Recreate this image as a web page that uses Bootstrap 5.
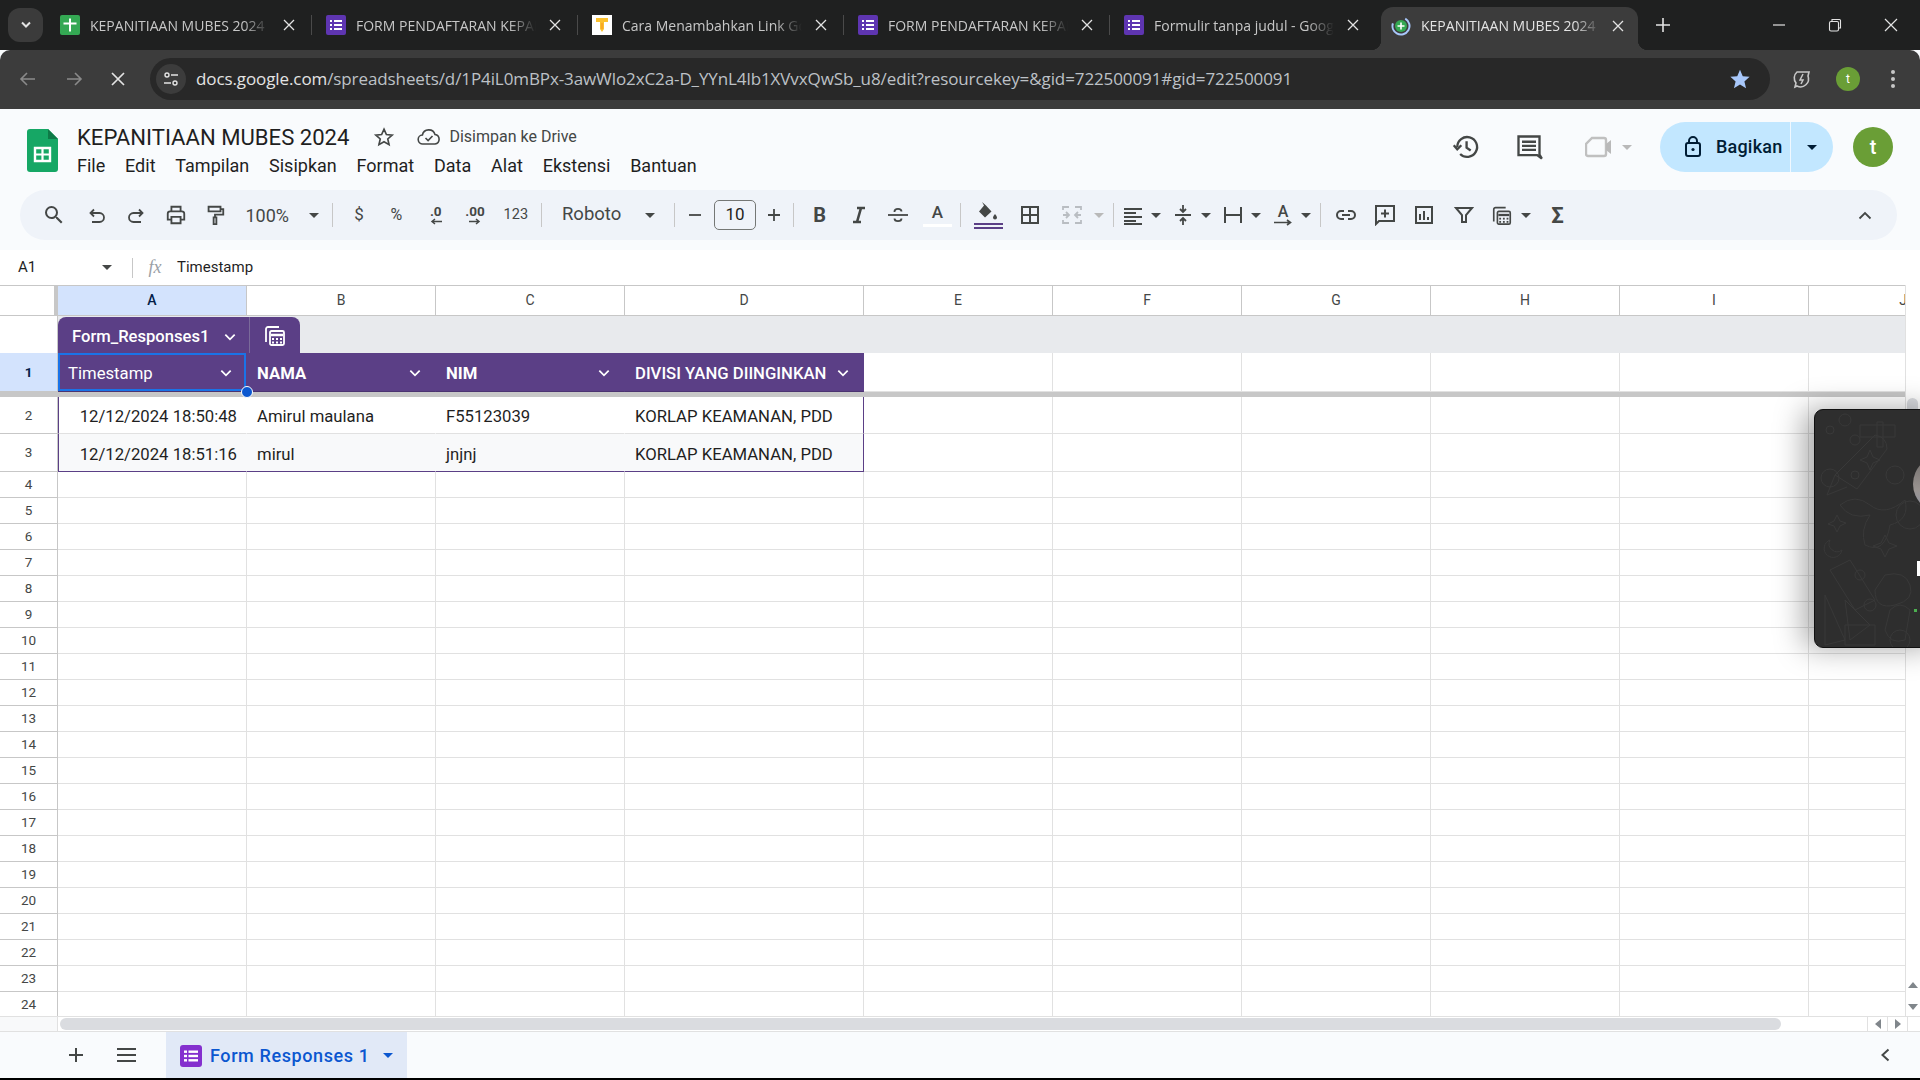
<!DOCTYPE html>
<html lang="id">
<head>
<meta charset="utf-8">
<title>KEPANITIAAN MUBES 2024</title>
<link href="https://cdn.jsdelivr.net/npm/bootstrap@5.3.0/dist/css/bootstrap.min.css" rel="stylesheet">
<style>
html,body{height:100%;margin:0;overflow:hidden;background:#f9fbfd}
body{font-family:Roboto,"Liberation Sans",sans-serif;color:#1f1f1f}
.app{width:1920px;height:1080px;position:relative;overflow:hidden}
.tabstrip{height:50px;background:#1f2020;padding-left:8px;color:#c7c7c7;font-family:"Open Sans",Roboto,sans-serif;font-size:14px;flex:none}
.tabsearch{width:35px;height:34px;margin-top:8px;border-radius:12px;background:#3b3b3b;flex:none;margin-right:3px}
.btab{width:266px;height:50px;flex:none;padding:0 0 0 14px;position:relative}
.btab::after{content:"";position:absolute;right:0;top:15px;height:20px;width:1px;background:#4a4a4a}
.btab.nosep::after{display:none}
.btab.onnow{width:257px;height:43px;margin-top:7px;margin-left:5px;background:#3c3c3c;border-radius:12px 12px 0 0;padding:0 0 6px 10px;color:#e3e3e3}
.btab.onnow::before{content:"";position:absolute;left:-10px;bottom:0;width:10px;height:10px;background:radial-gradient(circle at 0 0,transparent 10px,#3c3c3c 10.5px)}
.btab.onnow::after{display:block;left:auto;right:-10px;top:auto;bottom:0;width:10px;height:10px;background:radial-gradient(circle at 100% 0,transparent 10px,#3c3c3c 10.5px)}
.fav{width:20px;height:20px;flex:none;display:block}
.tabname{width:180px;margin-left:10px;white-space:nowrap;overflow:hidden;-webkit-mask-image:linear-gradient(90deg,#000 85%,transparent);mask-image:linear-gradient(90deg,#000 85%,transparent)}
.tabx{margin-left:12px;width:14px;height:14px;flex:none;color:#e3e3e3}
.onnow .tabx{margin-left:10px}
.plusbtn{margin-left:18px}
.winctl{margin-left:auto;width:148px;padding-right:22px;color:#e3e3e3}
.addrbar{height:59px;background:#3c3c3c;border-radius:10px 10px 0 0;padding:8px 0 9px 0;color:#c7c7c7;flex:none}
.navbtns{width:150px;padding:0 24px 0 18px;color:#8a8a8a;flex:none}
.urlpill{width:1620px;height:42px;background:#282828;border-radius:21px;padding:0 6px;flex:none}
.tunebtn{width:30px;height:30px;border-radius:50%;background:#3c3c3c;flex:none;margin-right:10px;color:#e3e3e3}
.urltxt{font-family:"Open Sans",Roboto,sans-serif;font-size:17px;letter-spacing:-.1px;color:#e3e3e3;white-space:nowrap;flex:1 1 auto}
.urltxt span{color:#bdc1c6}
.urlstar{margin-right:13px;flex:none}
.exticons{flex:1 1 auto;padding:0 24px 0 20px}
.prof{width:24px;height:24px;border-radius:50%;background:#6a9e36;color:#fff;font-size:12px;line-height:24px;text-align:center;margin:0 30px 0 22px;flex:none}
.dochead{height:81px;background:#f9fbfd;flex:none;padding-left:27px;position:relative}
.sheetlogo{width:31px;height:43px;margin-top:20px;flex:none}
.docmain{margin-left:19px;padding-top:12px}
.docname{font-size:22.1px;line-height:32px;color:#1f1f1f}
.cloudgap{margin-left:22px;flex:none}
.savedtxt{font-size:16px;color:#444746}
.menurow{gap:19.8px;font-size:18px;line-height:24px;margin-top:1px;color:#1f1f1f}
.dochead-right{margin-left:auto;padding:13px 27px 0 0;height:63px}
.gap-cmt{margin-left:35px;flex:none}
.gap-vid{margin-left:42px;flex:none}
.gap-vidc{margin-left:10px;margin-right:28px;flex:none}
.bagikan{height:50px;width:173px;border-radius:25px;background:#c2e7ff;color:#001d35;font-weight:500;font-size:18px;letter-spacing:.2px;flex:none}
.bagmain{width:131px;height:50px;border-right:1px solid #f0f8ff;padding:0 0 2px 23px;gap:13px}
.bagcaret{width:42px}
.docava{width:40px;height:40px;border-radius:50%;background:#6a9e36;color:#fff;font-size:20px;font-weight:500;margin-left:20px}
.tbwrap{height:60px;background:#f9fbfd;padding:0 23px 10px 20px;flex:none}
.tbar{height:50px;background:#eff3f9;border-radius:25px;color:#444746;padding-left:14px;font-size:16px}
.ti{width:39.3px;height:50px;flex:none;color:#444746}
.ti svg,.tw svg{display:block}
.tt{height:50px;flex:none;color:#444746}
.tsep{width:1px;height:24px;background:#c7c7c7;flex:none;margin:0 1px}
.tw{height:50px;flex:none}
.zoomsel{width:78px;margin-left:11px;font-size:18px}
.sep-zoom{margin:0 4px 0 9px}
.sep-fmt{margin:0 1px 0 7px}
.sep-size{margin:0 6px 0 1px}
.fontsel{width:130px;padding:0 18px 0 19px;font-size:18.5px}
.w-minus{width:38px}
.w-plus{width:36px}
.sizebox{width:42px;height:30px;border:1px solid #747775;border-radius:5px;font-size:17px;flex:none;color:#1f1f1f}
.smallnum{font-size:13.5px}
.num123{font-size:14.5px;padding-left:3px}
.dollar{font-size:17px;padding-left:4px}
.txtA{font-size:17px;font-weight:500}
.bar2{width:29px;height:3px;display:block;margin-top:3px}
.barfill{width:29px;height:6px;display:block;margin-top:1px;border-top:2px solid #5b3f86;border-bottom:2px solid #5b3f86}
.w-fill{width:44px;margin-left:4px}
.w-bord{width:39px}
.w-merge{width:34px}
.gap-mc{margin:0 8px 0 11px;flex:none}
.sep-a{margin:0 1px 0 3px}
.rotA{font-size:16px;font-weight:500;margin-bottom:-1px}
.sigma{font-size:22px;font-weight:700;margin-left:4px}
.collapse-ico{margin-left:auto;margin-right:25px}
.fbar{height:35px;background:#fff;flex:none;font-size:15px;color:#1f1f1f}
.cellref{width:132px;padding-left:18px;position:relative}
.fxsep{width:1px;height:20px;background:#c7c7c7;flex:none}
.fxmark{width:44px;text-align:center;font-family:"Liberation Serif",serif;font-style:italic;font-size:18px;color:#9aa0a6;flex:none}
.gridzone{height:731px;flex:none;background:#fff}
.gridclip{width:1905px;height:731px;overflow:hidden;flex:none}
.vscroll{width:15px;height:731px;border-left:1px solid #e1e1e1;flex:none;background:#fff;position:relative}
.vthumb{height:90px;margin:113px 2px 0 1px;border-radius:6px;background:#dadce0}
.varrows{padding-bottom:6px}
.sheet{border-collapse:separate;border-spacing:0;table-layout:fixed;width:1997px;font-size:16.7px;color:#1f1f1f}
.cw58{width:58px}.cw189{width:189px}.cw239{width:239px}
.sheet td,.sheet th{padding:0;border-right:1px solid #e1e1e1;border-bottom:1px solid #e1e1e1;font-weight:400;white-space:nowrap;overflow:hidden;vertical-align:middle}
.sheet th{text-align:center;color:#444746;font-size:13.5px}
.sheet .rowh{border-right:1px solid #c7c7c7;border-bottom-color:#c7c7c7}
.hdrrow th{height:31px;border-top:1px solid #c7c7c7;border-bottom:1px solid #c7c7c7;border-right:1px solid #c7c7c7;font-size:14px}
.hdrrow .corner{border-right:4px solid #c7c7c7;background:#fff}
.hdrrow .selcol{background:#d3e3fd;color:#041e49;font-weight:500}
.tabrow{height:37px}
.sheet .tabcell{background:#e8eaed;border-right:0;border-bottom:0;vertical-align:bottom;overflow:visible}
.sheet .tabh{border-bottom:0}
.tbltab{height:36px;width:242px;background:#5b3f86;border-radius:8px 8px 0 0;color:#fff;font-weight:500;font-size:16.6px}
.tblname{width:192px;padding:4px 8px 0 14px;border-right:1px solid #7a6a9a;height:36px}
.tblcalc{width:50px}
.r1{height:39px}
.r1 .rowh{background:#d3e3fd;color:#041e49;font-weight:700}
.sheet .pur{background:#5b3f86;color:#fff;font-weight:700;padding:3px 9px 0 10px;border-color:#4b3370;border-right-color:#5b3f86;position:relative}
.sheet .pur.a1{font-weight:400;box-shadow:inset 0 0 0 2px #1a73e8;overflow:visible}
.purin{gap:4px}
.knob{position:absolute;right:-7px;bottom:-7px;width:12px;height:12px;border-radius:50%;background:#0b57d0;border:1px solid #fff;z-index:3}
.frz{height:5px;font-size:0;line-height:0}
.sheet .frz td{background:#c7c7c7;border:0;height:5px}
.r2{height:37px}.r3{height:38px}.rn{height:26px}
.sheet .dat{padding:4px 9px 0 10px;border-right-color:#fff}
.r3 .dat{background:#f8f9fa;border-bottom-color:#5b3f86;border-right-color:#f8f9fa}
.sheet .dat.num{text-align:right;padding-right:9px;border-left:1px solid #5b3f86}
.sheet .dat.endc{border-right-color:#5b3f86}
.hstrip{height:15px;border-top:1px solid #e1e1e1;flex:none;background:#fff}
.hstrip-left{width:58px;background:#f8f9fa;flex:none;border-right:1px solid #e1e1e1}
.hthumb{width:1721px;height:12px;margin:1px 0 0 2px;border-radius:6px;background:#dadce0;flex:none}
.harrow{width:20px;height:14px;border-left:1px solid #e1e1e1;flex:none;color:#80868b}
.harrow.endbit{width:13px}
.sbar{height:47px;border-top:1px solid #e1e1e1;background:#f9fbfd;flex:none;position:relative;color:#444746}
.sbar-add{width:166px;flex:none;padding-left:67px;gap:32px}
.sheettab{width:241px;background:#e1e9f7;color:#0b57d0;font-weight:500;font-size:18px;letter-spacing:.6px;padding:1px 0 0 14px;gap:8px;flex:none}
.sheetcaret{margin-left:5px}
.sbar-end{margin-right:30px}
.bottomline{height:2px;background:#000;flex:none}
.floatcard{position:absolute;left:1814px;top:409px;width:130px;height:239px;background:#2e2e2e;border:1px solid #111;border-radius:9px;box-shadow:-10px 0 30px rgba(0,0,0,.35);overflow:hidden}
.floatcard svg{position:absolute;left:0;top:0}
.dis{color:#b9b9b9}
.txtg{color:#444746}
</style>
</head>
<body>
<svg width="0" height="0" class="position-absolute">
<defs>
<symbol id="i-x" viewBox="0 0 14 14"><path d="M2 2l10 10M12 2L2 12" stroke="currentColor" stroke-width="1.3" fill="none"/></symbol>
<symbol id="i-form" viewBox="0 0 20 20"><rect width="20" height="20" fill="#5e35b1" rx="2"/><g fill="#fff"><rect x="4" y="5" width="2" height="2"/><rect x="8" y="5" width="8" height="2"/><rect x="4" y="9" width="2" height="2"/><rect x="8" y="9" width="8" height="2"/><rect x="4" y="13" width="2" height="2"/><rect x="8" y="13" width="8" height="2"/></g></symbol>
<symbol id="i-caret" viewBox="0 0 10 5"><path d="M0 0h10L5 5z" fill="currentColor"/></symbol>
<symbol id="i-chev" viewBox="0 0 12 12"><path d="M2 4l4 4 4-4" stroke="currentColor" stroke-width="1.5" fill="none"/></symbol>
<symbol id="i-calc" viewBox="0 0 24 24"><path d="M3 19V6a2 2 0 0 1 2-2h11" fill="none" stroke="currentColor" stroke-width="1.8"/><rect x="7" y="8" width="14" height="14" rx="1.5" fill="none" stroke="currentColor" stroke-width="1.8"/><path d="M8 12h12" stroke="currentColor" stroke-width="2.5"/><g fill="currentColor"><rect x="9" y="15" width="2" height="2"/><rect x="13" y="15" width="2" height="2"/><rect x="17" y="15" width="2" height="2"/><rect x="9" y="18.5" width="2" height="2"/><rect x="13" y="18.5" width="2" height="2"/><rect x="17" y="18.5" width="2" height="2"/></g></symbol>
<linearGradient id="facegrad" x1="0" y1="0" x2="0" y2="1"><stop offset="0" stop-color="#6f6a68"/><stop offset=".6" stop-color="#9a9491"/><stop offset="1" stop-color="#8d93a6"/></linearGradient>
</defs>
</svg>
<div class="app d-flex flex-column">
  <div class="tabstrip d-flex">
    <div class="tabsearch d-flex align-items-center justify-content-center"><svg width="12" height="8" viewBox="0 0 12 8"><path d="M2 1.5l4 4 4-4" fill="none" stroke="#e3e3e3" stroke-width="2"/></svg></div>
    <div class="btab d-flex align-items-center">
      <svg class="fav" viewBox="0 0 20 20"><rect width="20" height="20" rx="2" fill="#34a853"/><path d="M10 3.5v13M3.5 8.5h13" stroke="#fff" stroke-width="2"/></svg>
      <span class="tabname">KEPANITIAAN MUBES 2024</span><svg class="tabx"><use href="#i-x"/></svg>
    </div>
    <div class="btab d-flex align-items-center">
      <svg class="fav"><use href="#i-form"/></svg>
      <span class="tabname">FORM PENDAFTARAN KEPANITIAAN</span><svg class="tabx"><use href="#i-x"/></svg>
    </div>
    <div class="btab d-flex align-items-center">
      <svg class="fav" viewBox="0 0 20 20"><rect width="20" height="20" fill="#fff"/><path d="M4 3h12v4h-4v7l-2 3-2-3V7H4z" fill="#fbc02d"/><path d="M9 8h2v6H9z" fill="#f9a825"/></svg>
      <span class="tabname">Cara Menambahkan Link Google Form</span><svg class="tabx"><use href="#i-x"/></svg>
    </div>
    <div class="btab d-flex align-items-center">
      <svg class="fav"><use href="#i-form"/></svg>
      <span class="tabname">FORM PENDAFTARAN KEPANITIAAN</span><svg class="tabx"><use href="#i-x"/></svg>
    </div>
    <div class="btab nosep d-flex align-items-center">
      <svg class="fav"><use href="#i-form"/></svg>
      <span class="tabname">Formulir tanpa judul - Google Formulir</span><svg class="tabx"><use href="#i-x"/></svg>
    </div>
    <div class="btab onnow d-flex align-items-center">
      <svg class="fav" viewBox="0 0 20 20"><circle cx="10" cy="10" r="8.5" fill="none" stroke="#a8c7fa" stroke-width="2" stroke-dasharray="38 16" transform="rotate(-60 10 10)"/><circle cx="10" cy="10" r="6" fill="#34a853"/><path d="M10 6.5v7M6.5 10h7" stroke="#fff" stroke-width="1.6"/></svg>
      <span class="tabname">KEPANITIAAN MUBES 2024</span><svg class="tabx"><use href="#i-x"/></svg>
    </div>
    <div class="plusbtn d-flex align-items-center"><svg width="14" height="14" viewBox="0 0 14 14"><path d="M7 0v14M0 7h14" stroke="#e3e3e3" stroke-width="1.6"/></svg></div>
    <div class="winctl d-flex align-items-center justify-content-between">
      <svg width="14" height="14" viewBox="0 0 14 14"><path d="M1 7h12" stroke="#e3e3e3" stroke-width="1.2"/></svg>
      <svg width="14" height="14" viewBox="0 0 14 14"><rect x="1.5" y="3.5" width="9" height="9.5" rx="1.5" fill="none" stroke="#e3e3e3" stroke-width="1.1"/><path d="M4 3V1.5h7.5a1 1 0 0 1 1 1V10H11" fill="none" stroke="#e3e3e3" stroke-width="1.1"/></svg>
      <svg width="14" height="14" viewBox="0 0 14 14"><path d="M1 1l12 12M13 1L1 13" stroke="#e3e3e3" stroke-width="1.2"/></svg>
    </div>
  </div>
  <div class="addrbar d-flex align-items-center">
    <div class="navbtns d-flex align-items-center justify-content-between">
      <svg width="20" height="20" viewBox="0 0 20 20"><path d="M17 10H4M9 4l-6 6 6 6" fill="none" stroke="currentColor" stroke-width="1.6"/></svg>
      <svg width="20" height="20" viewBox="0 0 20 20"><path d="M3 10h13M11 4l6 6-6 6" fill="none" stroke="currentColor" stroke-width="1.6"/></svg>
      <svg width="16" height="16" viewBox="0 0 16 16"><path d="M2 2l12 12M14 2L2 14" fill="none" stroke="#e3e3e3" stroke-width="1.7"/></svg>
    </div>
    <div class="urlpill d-flex align-items-center">
      <div class="tunebtn d-flex align-items-center justify-content-center"><svg width="16" height="16" viewBox="0 0 16 16"><g fill="none" stroke="currentColor" stroke-width="1.4"><circle cx="4" cy="4" r="2"/><path d="M8 4h7M1 12h7"/><circle cx="12" cy="12" r="2"/></g></svg></div>
      <div class="urltxt">docs.google.com<span>/spreadsheets/d/1P4iL0mBPx-3awWlo2xC2a-D_YYnL4lb1XVvxQwSb_u8/edit?resourcekey=&amp;gid=722500091#gid=722500091</span></div>
      <svg class="urlstar" width="22" height="22" viewBox="0 0 24 24"><path d="M12 2l3 7 7.5.6-5.7 5 1.8 7.4L12 18l-6.6 4 1.8-7.4-5.7-5L9 9z" fill="#a8c7fa"/></svg>
    </div>
    <div class="exticons d-flex align-items-center">
      <svg class="flex-none" width="24" height="24" viewBox="0 0 24 24"><path d="M7 5h12l-1 4v0a8 8 0 0 1-11 10l-2 1 1-4a8 8 0 0 1 1-11z" fill="none" stroke="#c7c7c7" stroke-width="1.6"/><path d="M13 7l-3 6h3l-2 4" fill="none" stroke="#c7c7c7" stroke-width="1.5"/></svg>
      <div class="prof">t</div>
      <svg class="flex-none" width="6" height="20" viewBox="0 0 6 20"><g fill="#c7c7c7"><circle cx="3" cy="3" r="2"/><circle cx="3" cy="10" r="2"/><circle cx="3" cy="17" r="2"/></g></svg>
    </div>
  </div>
  <div class="dochead d-flex">
    <svg class="sheetlogo" viewBox="0 0 31 43"><path d="M3 0h18l10 10v30a3 3 0 0 1-3 3H3a3 3 0 0 1-3-3V3a3 3 0 0 1 3-3z" fill="#16a765"/><path d="M21 0l10 10H21z" fill="#0e7a47"/><path d="M8 19h15v13H8z" fill="none" stroke="#fff" stroke-width="2.4"/><path d="M15.5 19v13M8 25.5h15" stroke="#fff" stroke-width="2.2"/></svg>
    <div class="docmain">
      <div class="d-flex align-items-center">
        <span class="docname">KEPANITIAAN MUBES 2024</span>
        <svg class="ms-4 flex-none" width="22" height="22" viewBox="0 0 24 24"><path d="M12 3.5l2.6 5.8 6.3.6-4.8 4.2 1.4 6.2L12 17.1l-5.5 3.2 1.4-6.2-4.8-4.2 6.3-.6z" fill="none" stroke="#444746" stroke-width="1.8"/></svg>
        <svg class="cloudgap" width="24" height="20" viewBox="0 0 24 20"><path d="M6 17a4.5 4.5 0 0 1-.6-9A6.5 6.5 0 0 1 18 7.5 4.8 4.8 0 0 1 18 17z" fill="none" stroke="#444746" stroke-width="1.6"/><path d="M8.5 11l2.6 2.6 4.4-4.6" fill="none" stroke="#444746" stroke-width="1.6"/></svg>
        <span class="savedtxt ms-2">Disimpan ke Drive</span>
      </div>
      <div class="menurow d-flex"><span>File</span><span>Edit</span><span>Tampilan</span><span>Sisipkan</span><span>Format</span><span>Data</span><span>Alat</span><span>Ekstensi</span><span>Bantuan</span></div>
    </div>
    <div class="dochead-right d-flex align-items-center">
      <svg class="flex-none" width="28" height="28" viewBox="0 0 24 24"><path d="M4.5 12A8.5 8.5 0 1 1 7 18" fill="none" stroke="#444746" stroke-width="2"/><path d="M1.5 10.5L4.5 14l3.5-3.5" fill="none" stroke="#444746" stroke-width="2"/><path d="M12.5 7v5.5l3.5 2.5" fill="none" stroke="#444746" stroke-width="2"/></svg>
      <svg class="gap-cmt" width="28" height="28" viewBox="0 0 24 24"><path d="M3 3h18v15.5l2 3.5-4-3H3z" fill="none" stroke="#444746" stroke-width="2"/><path d="M6 7.5h12M6 11h12M6 14.5h12" stroke="#444746" stroke-width="2"/></svg>
      <svg class="gap-vid" width="27" height="24" viewBox="0 0 27 24"><path d="M7 3h12a2 2 0 0 1 2 2v14a2 2 0 0 1-2 2H3a2 2 0 0 1-2-2V9z" fill="none" stroke="#c0c0c0" stroke-width="2.4"/><path d="M21 9l5-4v14l-5-4z" fill="#b9b9b9"/></svg>
      <svg class="gap-vidc dis" width="10" height="5"><use href="#i-caret"/></svg>
      <div class="bagikan d-flex align-items-center">
        <div class="bagmain d-flex align-items-center"><svg class="flex-none" width="20" height="23" viewBox="0 0 20 23"><rect x="3" y="8" width="14" height="13" rx="2" fill="none" stroke="#001d35" stroke-width="2"/><path d="M6 8V6a4 4 0 0 1 8 0v2" fill="none" stroke="#001d35" stroke-width="2"/><circle cx="10" cy="14.5" r="1.6" fill="#001d35"/></svg><span>Bagikan</span></div>
        <div class="bagcaret d-flex align-items-center justify-content-center"><svg width="10" height="5"><use href="#i-caret"/></svg></div>
      </div>
      <div class="docava d-flex align-items-center justify-content-center flex-none">t</div>
    </div>
  </div>
  <div class="tbwrap">
    <div class="tbar d-flex align-items-center">
      <div class="ti d-flex align-items-center justify-content-center"><svg width="24" height="24" viewBox="0 0 24 24"><path fill="currentColor" d="M15.5 14h-.79l-.28-.27A6.471 6.471 0 0 0 16 9.5 6.5 6.5 0 1 0 9.5 16c1.61 0 3.09-.59 4.23-1.57l.27.28v.79l5 4.99L20.49 19l-4.99-5zm-6 0C7.01 14 5 11.99 5 9.5S7.01 5 9.5 5 14 7.01 14 9.5 11.99 14 9.5 14z"/></svg></div>
      <div class="ti d-flex align-items-center justify-content-center ms-1"><svg width="20" height="20" viewBox="0 0 20 20"><path d="M3.5 8h9a4.5 4.5 0 0 1 0 9H5M7 4.5L3.5 8 7 11.5" fill="none" stroke="currentColor" stroke-width="1.8"/></svg></div>
      <div class="ti d-flex align-items-center justify-content-center"><svg width="20" height="20" viewBox="0 0 20 20"><path d="M16.5 8h-9a4.5 4.5 0 0 0 0 9H15M13 4.5L16.5 8 13 11.5" fill="none" stroke="currentColor" stroke-width="1.8"/></svg></div>
      <div class="ti d-flex align-items-center justify-content-center"><svg width="22" height="22" viewBox="0 0 24 24"><path d="M7 8V3h10v5M7 17H3v-6.5A2.5 2.5 0 0 1 5.5 8h13a2.5 2.5 0 0 1 2.5 2.5V17h-4M7 14h10v7H7z" fill="none" stroke="currentColor" stroke-width="2"/></svg></div>
      <div class="ti d-flex align-items-center justify-content-center"><svg width="22" height="22" viewBox="0 0 24 24"><path d="M5 3h13v5H5zM18 5.5h3v6H12v3M10.5 14.5h3V22h-3z" fill="none" stroke="currentColor" stroke-width="2"/></svg></div>
      <div class="tt zoomsel d-flex align-items-center">100%<svg class="ms-auto me-1" width="10" height="5"><use href="#i-caret"/></svg></div>
      <div class="tsep sep-zoom"></div>
      <div class="ti dollar d-flex align-items-center justify-content-center">$</div>
      <div class="ti d-flex align-items-center justify-content-center">%</div>
      <div class="ti d-flex flex-column align-items-center justify-content-center lh-1"><span class="fw-bold smallnum">.0</span><svg width="14" height="7" viewBox="0 0 14 7"><path d="M13 3.5H3M6 1L3 3.5 6 6" fill="none" stroke="currentColor" stroke-width="1.5"/></svg></div>
      <div class="ti d-flex flex-column align-items-center justify-content-center lh-1"><span class="fw-bold smallnum">.00</span><svg width="14" height="7" viewBox="0 0 14 7"><path d="M1 3.5h10M8 1l3 2.5L8 6" fill="none" stroke="currentColor" stroke-width="1.5"/></svg></div>
      <div class="ti num123 d-flex align-items-center justify-content-center">123</div>
      <div class="tsep sep-fmt"></div>
      <div class="tt fontsel d-flex align-items-center">Roboto<svg class="ms-auto" width="10" height="5"><use href="#i-caret"/></svg></div>
      <div class="tsep"></div>
      <div class="ti w-minus d-flex align-items-center justify-content-center"><svg width="14" height="14" viewBox="0 0 14 14"><path d="M1 7h12" stroke="currentColor" stroke-width="1.8"/></svg></div>
      <div class="sizebox d-flex align-items-center justify-content-center">10</div>
      <div class="ti w-plus d-flex align-items-center justify-content-center"><svg width="14" height="14" viewBox="0 0 14 14"><path d="M1 7h12M7 1v12" stroke="currentColor" stroke-width="1.8"/></svg></div>
      <div class="tsep sep-size"></div>
      <div class="ti d-flex align-items-center justify-content-center fw-bold fs-5">B</div>
      <div class="ti d-flex align-items-center justify-content-center"><svg width="20" height="20" viewBox="0 0 20 20"><path d="M8 3h8M4 17h8M12 3L8 17" fill="none" stroke="currentColor" stroke-width="2.6"/></svg></div>
      <div class="ti d-flex align-items-center justify-content-center"><svg width="22" height="22" viewBox="0 0 22 22"><path d="M1 11h20" stroke="currentColor" stroke-width="1.8"/><path d="M7.5 8V7.5c0-3.5 7-3.5 7 0M7.5 14.5c0 3.5 7 3.5 7 0" fill="none" stroke="currentColor" stroke-width="1.8"/></svg></div>
      <div class="ti d-flex flex-column align-items-center justify-content-center lh-1"><span class="txtA">A</span><span class="bar2 bg-white"></span></div>
      <div class="tsep sep-a"></div>
      <div class="ti w-fill d-flex flex-column align-items-center justify-content-center"><svg width="24" height="20" viewBox="0 0 24 20"><path d="M6 0l2 3.5-5 6 6 6 6.5-6L10 3.5z" fill="currentColor"/><path d="M19 12c1.5 2 2 2.8 2 3.6a2 2 0 0 1-4 0c0-.8.5-1.6 2-3.6z" fill="currentColor"/></svg><span class="barfill"></span></div>
      <div class="ti w-bord d-flex align-items-center justify-content-center"><svg width="20" height="20" viewBox="0 0 20 20"><path d="M2 2h16v16H2zM10 2v16M2 10h16" fill="none" stroke="currentColor" stroke-width="2"/></svg></div>
      <div class="ti w-merge d-flex align-items-center justify-content-end"><svg width="22" height="22" viewBox="0 0 22 22"><path d="M2 6V3h6M14 3h6v3M2 16v3h6M14 19h6v-3M2 11h6M5 8l3 3-3 3M20 11h-6M17 8l-3 3 3 3" fill="none" stroke="#b9bdc2" stroke-width="1.8"/></svg></div>
      <svg class="dis gap-mc" width="10" height="5"><use href="#i-caret"/></svg>
      <div class="tsep"></div>
      <div class="tw d-flex align-items-center ms-2"><svg width="20" height="20" viewBox="0 0 20 20"><path d="M1 3h18M1 7h12M1 11h18M1 15h12" transform="translate(0 1)" stroke="currentColor" stroke-width="2" fill="none"/><path d="M1 19h18" stroke="currentColor" stroke-width="2"/></svg></div>
      <svg class="mx-2 flex-none" width="10" height="5"><use href="#i-caret"/></svg>
      <div class="tw d-flex align-items-center ms-1"><svg width="20" height="22" viewBox="0 0 20 22"><path d="M2 11h16" stroke="currentColor" stroke-width="2"/><path d="M10 1v7M7 5l3 3 3-3M10 21v-7M7 17l3-3 3 3" fill="none" stroke="currentColor" stroke-width="1.8"/></svg></div>
      <svg class="mx-2 flex-none" width="10" height="5"><use href="#i-caret"/></svg>
      <div class="tw d-flex align-items-center ms-1"><svg width="20" height="20" viewBox="0 0 20 20"><path d="M2 2v16M18 2v16M2 10h16" fill="none" stroke="currentColor" stroke-width="2"/></svg></div>
      <svg class="mx-2 flex-none" width="10" height="5"><use href="#i-caret"/></svg>
      <div class="tw d-flex flex-column justify-content-center align-items-center ms-1 lh-1"><span class="rotA">A</span><svg width="20" height="7" viewBox="0 0 20 7"><path d="M1 3.5h16M14 1l3.5 2.5L14 6" fill="none" stroke="currentColor" stroke-width="1.6"/></svg></div>
      <svg class="mx-2 flex-none" width="10" height="5"><use href="#i-caret"/></svg>
      <div class="tsep"></div>
      <div class="ti d-flex align-items-center justify-content-center ms-1"><svg width="22" height="22" viewBox="0 0 22 22"><path d="M9 7H6a4 4 0 0 0 0 8h3M13 7h3a4 4 0 0 1 0 8h-3M7 11h8" fill="none" stroke="currentColor" stroke-width="2"/></svg></div>
      <div class="ti d-flex align-items-center justify-content-center"><svg width="22" height="22" viewBox="0 0 22 22"><path d="M2 2h18v15H5l-3 3zM11 5.5v8M7 9.5h8" fill="none" stroke="currentColor" stroke-width="2"/></svg></div>
      <div class="ti d-flex align-items-center justify-content-center"><svg width="20" height="20" viewBox="0 0 20 20"><path d="M2 2h16v16H2z" fill="none" stroke="currentColor" stroke-width="2"/><path d="M6 15V9M10 15V6M14 15v-3" stroke="currentColor" stroke-width="2"/></svg></div>
      <div class="ti d-flex align-items-center justify-content-center"><svg width="20" height="20" viewBox="0 0 20 20"><path d="M2 3h16l-6 7v7H8v-7z" fill="none" stroke="currentColor" stroke-width="2"/></svg></div>
      <div class="tw d-flex align-items-center ms-2"><svg width="22" height="22"><use href="#i-calc"/></svg></div>
      <svg class="ms-2 me-3 flex-none" width="10" height="5"><use href="#i-caret"/></svg>
      <div class="tw sigma d-flex align-items-center">Σ</div>
      <div class="tw collapse-ico d-flex align-items-center"><svg width="14" height="9" viewBox="0 0 14 9"><path d="M1.5 7.5L7 2l5.5 5.5" fill="none" stroke="currentColor" stroke-width="1.8"/></svg></div>
    </div>
  </div>
  <div class="fbar d-flex align-items-center">
    <div class="cellref d-flex align-items-center justify-content-between pe-3"><span>A1</span><svg class="me-1 txtg" width="10" height="5"><use href="#i-caret"/></svg></div>
    <div class="fxsep"></div>
    <div class="fxmark">fx</div>
    <div>Timestamp</div>
  </div>
  <div class="gridzone d-flex">
    <div class="gridclip">
      <table class="sheet">
        <colgroup><col class="cw58"><col class="cw189"><col class="cw189"><col class="cw189"><col class="cw239"><col class="cw189"><col class="cw189"><col class="cw189"><col class="cw189"><col class="cw189"><col class="cw189"></colgroup>
        <tr class="hdrrow"><th class="corner"></th><th class="selcol">A</th><th>B</th><th>C</th><th>D</th><th>E</th><th>F</th><th>G</th><th>H</th><th>I</th><th>J</th></tr>
        <tr class="tabrow"><th class="rowh tabh"></th><td class="tabcell" colspan="10">
          <div class="tbltab d-flex align-items-center">
            <div class="tblname d-flex align-items-center justify-content-between"><span>Form_Responses1</span><svg width="14" height="14" class="me-1"><use href="#i-chev"/></svg></div>
            <div class="tblcalc d-flex align-items-center justify-content-center"><svg width="24" height="24"><use href="#i-calc"/></svg></div>
          </div></td></tr>
        <tr class="r1"><th class="rowh">1</th>
          <td class="pur a1"><div class="d-flex align-items-center justify-content-between purin"><span>Timestamp</span><svg width="14" height="14" class="me-1"><use href="#i-chev"/></svg></div><span class="knob"></span></td>
          <td class="pur"><div class="d-flex align-items-center justify-content-between purin"><span>NAMA</span><svg width="14" height="14" class="me-1"><use href="#i-chev"/></svg></div></td>
          <td class="pur"><div class="d-flex align-items-center justify-content-between purin"><span>NIM</span><svg width="14" height="14" class="me-1"><use href="#i-chev"/></svg></div></td>
          <td class="pur"><div class="d-flex align-items-center justify-content-between purin"><span class="fw-medium">DIVISI YANG DIINGINKAN</span><svg width="14" height="14" class="me-1"><use href="#i-chev"/></svg></div></td>
          <td></td><td></td><td></td><td></td><td></td><td></td></tr>
        <tr class="frz"><td colspan="11"></td></tr>
        <tr class="r2"><th class="rowh">2</th><td class="dat num">12/12/2024 18:50:48</td><td class="dat">Amirul maulana</td><td class="dat">F55123039</td><td class="dat endc">KORLAP KEAMANAN, PDD</td><td></td><td></td><td></td><td></td><td></td><td></td></tr>
        <tr class="r3"><th class="rowh">3</th><td class="dat num">12/12/2024 18:51:16</td><td class="dat">mirul</td><td class="dat">jnjnj</td><td class="dat endc">KORLAP KEAMANAN, PDD</td><td></td><td></td><td></td><td></td><td></td><td></td></tr>
        <tr class="rn"><th class="rowh">4</th><td></td><td></td><td></td><td></td><td></td><td></td><td></td><td></td><td></td><td></td></tr>
        <tr class="rn"><th class="rowh">5</th><td></td><td></td><td></td><td></td><td></td><td></td><td></td><td></td><td></td><td></td></tr>
        <tr class="rn"><th class="rowh">6</th><td></td><td></td><td></td><td></td><td></td><td></td><td></td><td></td><td></td><td></td></tr>
        <tr class="rn"><th class="rowh">7</th><td></td><td></td><td></td><td></td><td></td><td></td><td></td><td></td><td></td><td></td></tr>
        <tr class="rn"><th class="rowh">8</th><td></td><td></td><td></td><td></td><td></td><td></td><td></td><td></td><td></td><td></td></tr>
        <tr class="rn"><th class="rowh">9</th><td></td><td></td><td></td><td></td><td></td><td></td><td></td><td></td><td></td><td></td></tr>
        <tr class="rn"><th class="rowh">10</th><td></td><td></td><td></td><td></td><td></td><td></td><td></td><td></td><td></td><td></td></tr>
        <tr class="rn"><th class="rowh">11</th><td></td><td></td><td></td><td></td><td></td><td></td><td></td><td></td><td></td><td></td></tr>
        <tr class="rn"><th class="rowh">12</th><td></td><td></td><td></td><td></td><td></td><td></td><td></td><td></td><td></td><td></td></tr>
        <tr class="rn"><th class="rowh">13</th><td></td><td></td><td></td><td></td><td></td><td></td><td></td><td></td><td></td><td></td></tr>
        <tr class="rn"><th class="rowh">14</th><td></td><td></td><td></td><td></td><td></td><td></td><td></td><td></td><td></td><td></td></tr>
        <tr class="rn"><th class="rowh">15</th><td></td><td></td><td></td><td></td><td></td><td></td><td></td><td></td><td></td><td></td></tr>
        <tr class="rn"><th class="rowh">16</th><td></td><td></td><td></td><td></td><td></td><td></td><td></td><td></td><td></td><td></td></tr>
        <tr class="rn"><th class="rowh">17</th><td></td><td></td><td></td><td></td><td></td><td></td><td></td><td></td><td></td><td></td></tr>
        <tr class="rn"><th class="rowh">18</th><td></td><td></td><td></td><td></td><td></td><td></td><td></td><td></td><td></td><td></td></tr>
        <tr class="rn"><th class="rowh">19</th><td></td><td></td><td></td><td></td><td></td><td></td><td></td><td></td><td></td><td></td></tr>
        <tr class="rn"><th class="rowh">20</th><td></td><td></td><td></td><td></td><td></td><td></td><td></td><td></td><td></td><td></td></tr>
        <tr class="rn"><th class="rowh">21</th><td></td><td></td><td></td><td></td><td></td><td></td><td></td><td></td><td></td><td></td></tr>
        <tr class="rn"><th class="rowh">22</th><td></td><td></td><td></td><td></td><td></td><td></td><td></td><td></td><td></td><td></td></tr>
        <tr class="rn"><th class="rowh">23</th><td></td><td></td><td></td><td></td><td></td><td></td><td></td><td></td><td></td><td></td></tr>
        <tr class="rn"><th class="rowh">24</th><td></td><td></td><td></td><td></td><td></td><td></td><td></td><td></td><td></td><td></td></tr>
      </table>
    </div>
    <div class="vscroll d-flex flex-column">
      <div class="vthumb"></div>
      <div class="varrows mt-auto d-flex flex-column align-items-center gap-3"><svg width="10" height="6" viewBox="0 0 10 6"><path d="M0 6l5-6 5 6z" fill="#80868b"/></svg><svg width="10" height="6" viewBox="0 0 10 6"><path d="M0 0l5 6 5-6z" fill="#80868b"/></svg></div>
    </div>
  </div>
  <div class="hstrip d-flex">
    <div class="hstrip-left"></div>
    <div class="hthumb"></div>
    <div class="harrow d-flex align-items-center justify-content-center ms-auto"><svg width="6" height="10" viewBox="0 0 6 10"><path d="M6 0L0 5l6 5z" fill="currentColor"/></svg></div>
    <div class="harrow d-flex align-items-center justify-content-center"><svg width="6" height="10" viewBox="0 0 6 10"><path d="M0 0l6 5-6 5z" fill="currentColor"/></svg></div>
    <div class="harrow endbit"></div>
  </div>
  <div class="sbar d-flex">
    <div class="sbar-add d-flex align-items-center">
      <svg width="18" height="18" viewBox="0 0 18 18"><path d="M9 2v14M2 9h14" stroke="currentColor" stroke-width="2"/></svg>
      <svg width="19" height="14" viewBox="0 0 19 14"><path d="M0 1h19M0 7h19M0 13h19" stroke="currentColor" stroke-width="2"/></svg>
    </div>
    <div class="sheettab d-flex align-items-center">
      <svg class="flex-none" width="22" height="22" viewBox="0 0 22 22"><rect width="22" height="22" rx="3" fill="#8430ce"/><g fill="#fff"><rect x="4" y="5.5" width="3" height="2.4"/><rect x="8.5" y="5.5" width="9.5" height="2.4"/><rect x="4" y="9.8" width="3" height="2.4"/><rect x="8.5" y="9.8" width="9.5" height="2.4"/><rect x="4" y="14.1" width="3" height="2.4"/><rect x="8.5" y="14.1" width="9.5" height="2.4"/></g></svg>
      <span>Form Responses 1</span>
      <svg class="sheetcaret" width="10" height="5"><use href="#i-caret"/></svg>
    </div>
    <div class="sbar-end ms-auto d-flex align-items-center"><svg width="10" height="14" viewBox="0 0 10 14"><path d="M8.5 1.5L2.5 7l6 5.5" fill="none" stroke="#444746" stroke-width="2"/></svg></div>
  </div>
  <div class="bottomline"></div>
  <div class="floatcard">
    <svg width="130" height="239" viewBox="0 0 130 239">
      <g fill="none" stroke="#393939" stroke-width="1">
        <path d="M20 65l40-40q12 2 12 14l-30 40zM20 65l-8 20 20-8"/><circle cx="40" cy="30" r="5"/>
        <path d="M45 15h35v12H45z"/><path d="M62 12h6v25h-6z"/><circle cx="30" cy="10" r="6"/><circle cx="15" cy="20" r="4"/>
        <path d="M55 40l3 7 7 3-7 3-3 7-3-7-7-3 7-3z"/><circle cx="15" cy="68" r="9"/><circle cx="80" cy="65" r="9"/><circle cx="40" cy="65" r="4"/>
        <path d="M25 95q15-12 30 0t35-5q5 20-15 25-5 30-25 20-5-15 5-30-20 5-30-10z"/><path d="M22 105l3 6 6 2-6 3-3 6-3-6-6-2 6-3z"/>
        <circle cx="95" cy="105" r="14"/><path d="M70 125l4 8 8 3-8 3-4 8-4-8-8-3 8-3z"/>
        <path d="M15 130a9 9 0 1 0 12 10 8 8 0 0 1-12-10z"/><path d="M15 160l20-10 25 40-20 10z"/><circle cx="45" cy="165" r="5"/>
        <path d="M10 185l20 45-20 5zM30 190l25 25-20 15z"/><circle cx="55" cy="195" r="6"/><path d="M70 165q20-5 25 10t-15 20-20-15z"/>
        <path d="M75 200q10-10 20 0l-5 30q-15 5-20-10z"/><circle cx="85" cy="230" r="10"/><path d="M30 215h30v20H30z"/>
      </g>
      <ellipse cx="130" cy="74" rx="32" ry="30" fill="url(#facegrad)"/>
      <rect x="102" y="151" width="5" height="15" fill="#fff"/>
      <rect x="99" y="199" width="3" height="3" fill="#4caf50"/>
    </svg>
  </div>
</div>
</body>
</html>
